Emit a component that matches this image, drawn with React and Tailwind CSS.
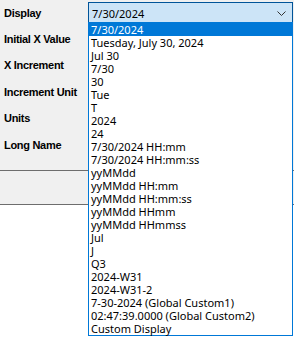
import React from 'react';

const labels = ['Display', 'Initial X Value', 'X Increment', 'Increment Unit', 'Units', 'Long Name'];

const options = [
  '7/30/2024',
  'Tuesday, July 30, 2024',
  'Jul 30',
  '7/30',
  '30',
  'Tue',
  'T',
  '2024',
  '24',
  '7/30/2024 HH:mm',
  '7/30/2024 HH:mm:ss',
  'yyMMdd',
  'yyMMdd HH:mm',
  'yyMMdd HH:mm:ss',
  'yyMMdd HHmm',
  'yyMMdd HHmmss',
  'Jul',
  'J',
  'Q3',
  '2024-W31',
  '2024-W31-2',
  '7-30-2024 (Global Custom1)',
  '02:47:39.0000 (Global Custom2)',
  'Custom Display',
];

export default function App() {
  return (
    <div className="relative w-[294px] h-[337px] bg-white text-[11px] text-black overflow-hidden font-[family-name:'Noto_Sans','Liberation_Sans',sans-serif]">
      {/* Property grid */}
      <div className="bg-[#f0f0f0] border-b border-[#6d6d6d]">
        <div className="h-[170px] flex flex-col">
          {labels.map((label, i) => (
            <div key={label} className="h-[26.4px] flex items-center">
              <span className="pl-[4px] w-[88px] font-bold text-[11px] tracking-[-0.3px] leading-none whitespace-nowrap font-[family-name:'Liberation_Sans',Arial,sans-serif]">
                {label}
              </span>
              {i === 0 && (
                <div className="w-[205px] h-[22px] flex items-center justify-between border border-[#005499] bg-[#cce4f7] pl-[3px] pr-[6px]">
                  <span className="leading-none">7/30/2024</span>
                  <svg width="9" height="5" viewBox="0 0 9 5">
                    <polyline points="0.5,0.5 4.5,4.5 8.5,0.5" fill="none" stroke="#333" strokeWidth="1" />
                  </svg>
                </div>
              )}
            </div>
          ))}
        </div>
        <div className="h-[34px] border-t border-[#6d6d6d]" />
      </div>

      {/* Dropdown list */}
      <div className="absolute left-[88px] top-[22px] w-[205px] h-[314px] bg-white border border-[#0078d7] flex flex-col">
        {options.map((opt, i) => (
          <div
            key={opt}
            className={`h-[13px] pl-[2px] flex items-center leading-[12px] whitespace-nowrap ${
              i === 0 ? 'bg-[#0078d7] text-white' : ''
            }`}
          >
            {opt}
          </div>
        ))}
      </div>
    </div>
  );
}
